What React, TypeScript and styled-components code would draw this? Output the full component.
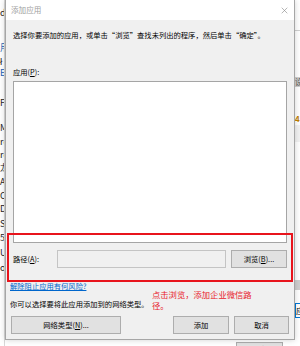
import React from "react";
import styled, { createGlobalStyle } from "styled-components";

const GlobalStyle = createGlobalStyle`
  html, body {
    margin: 0;
    padding: 0;
    background: #ffffff;
  }
  body {
    font-family: "Noto Sans CJK SC", "Noto Sans", sans-serif;
    -webkit-font-smoothing: antialiased;
  }
`;

// 背景窗口里露出来的碎片
const leftBits: { text: string; color?: string; gap: number }[] = [
  { text: "d", gap: 8 },
  { text: "用", color: "#1a5fb4", gap: 25 },
  { text: "ł", gap: 4 },
  { text: "E", color: "#1a5fb4", gap: 1 },
  { text: "F", gap: 20 },
  { text: "Mi", gap: 15 },
  { text: "re", gap: 4 },
  { text: "re", gap: 3 },
  { text: "龙", gap: 3 },
  { text: "A", gap: 4 },
  { text: "Cl", gap: 4 },
  { text: "Di", gap: 3 },
  { text: "Se", gap: 5 },
  { text: "5e", gap: 4 },
  { text: "U", gap: 5 },
  { text: "or", gap: 5 },
];

const App: React.FC = () => {
  return (
    <Desktop>
      <GlobalStyle />
      <BackWindow>
        <LeftStrip>
          {leftBits.map((b, i) => (
            <StripText key={i} color={b.color} gap={b.gap}>
              {b.text}
            </StripText>
          ))}
        </LeftStrip>
        <BackMiddle>
          <BackButton>确定</BackButton>
        </BackMiddle>
        <RightStrip>
          <StripLine />
          <StripBlock tall={10}>设</StripBlock>
          <StripIcon>4</StripIcon>
          <StripBlock tall={17} light />
          <StripSpacer />
          <StripBlock tall={10} />
          <StripButton>应</StripButton>
        </RightStrip>
      </BackWindow>

      <Dialog>
        <TitleBar>
          <Title>添加应用</Title>
          <CloseIcon viewBox="0 0 10 10">
            <path d="M1 1 L9 9 M9 1 L1 9" />
          </CloseIcon>
        </TitleBar>
        <Body>
          <TopSection>
            <Instruction>
              选择你要添加的应用，或单击“浏览”查找未列出的程序，然后单击“确定”。
            </Instruction>
            <Label>
              应用(<u>P</u>):
            </Label>
            <ListBox />
            <PathRow>
              <Label>
                路径(<u>A</u>):
              </Label>
              <PathInput />
              <Button width={56}>
                浏览(<u>B</u>)...
              </Button>
            </PathRow>
          </TopSection>
          <LowerSection>
            <Link>解除阻止应用有何风险?</Link>
            <Note>你可以选择要将此应用添加到的网络类型。</Note>
            <ButtonRow>
              <Button width={110}>
                网络类型(<u>N</u>)...
              </Button>
              <Spacer />
              <Button width={56}>添加</Button>
              <Button width={55}>取消</Button>
            </ButtonRow>
          </LowerSection>
        </Body>
      </Dialog>

      {/* 标注 */}
      <RedBox />
      <RedNote>
        点击浏览，添加企业微信路
        <br />
        径。
      </RedNote>
    </Desktop>
  );
};

const Desktop = styled.div`
  position: relative;
  width: 300px;
  height: 346px;
  overflow: hidden;
  background: #ffffff;
`;

const BackWindow = styled.div`
  display: flex;
  height: 100%;
`;

const LeftStrip = styled.div`
  width: 5px;
  display: flex;
  flex-direction: column;
  overflow: hidden;
  border-right: 1px solid #d8d8d8;
  box-sizing: border-box;
`;

const StripText = styled.div<{ color?: string; gap: number }>`
  margin-top: ${({ gap }) => gap}px;
  font-size: 9px;
  line-height: 10px;
  white-space: nowrap;
  color: ${({ color }) => color || "#222"};
`;

const BackMiddle = styled.div`
  flex: 1;
  display: flex;
  flex-direction: column;
  justify-content: flex-end;
  align-items: flex-end;
  padding-right: 12px;
`;

const BackButton = styled.div`
  width: 47px;
  height: 18px;
  margin-bottom: -14px;
  border: 1px solid #adadad;
  background: #e1e1e1;
  font-size: 7.5px;
  line-height: 14px;
  text-align: center;
  color: #000;
  box-sizing: border-box;
`;

const RightStrip = styled.div`
  width: 5px;
  display: flex;
  flex-direction: column;
  overflow: hidden;
  padding-top: 30px;
`;

const StripLine = styled.div`
  height: 1px;
  background: #d0d0d0;
`;

const StripBlock = styled.div<{ tall: number; light?: boolean }>`
  height: ${({ tall }) => tall}px;
  margin-top: ${({ light }) => (light ? 2 : 46)}px;
  background: ${({ light }) => (light ? "#f2f2f2" : "#cfcfcf")};
  font-size: 8px;
  line-height: 10px;
  color: #555;
  white-space: nowrap;
`;

const StripIcon = styled.div`
  margin-top: 27px;
  font-size: 8px;
  line-height: 9px;
  font-weight: bold;
  color: #c08000;
`;

const StripSpacer = styled.div`
  flex: 1;
`;

const StripButton = styled.div`
  margin: 13px 0 28px;
  height: 13px;
  border: 1px solid #0078d7;
  border-right: none;
  font-size: 8px;
  line-height: 13px;
  color: #000;
  white-space: nowrap;
`;

const Dialog = styled.div`
  position: absolute;
  left: 5px;
  top: 0;
  width: 290px;
  height: 340px;
  box-sizing: border-box;
  border: 1px solid #a6a6a6;
  border-top: none;
  background: #f0f0f0;
  box-shadow: 0 0 6px rgba(0, 0, 0, 0.18);
  display: flex;
  flex-direction: column;
`;

const TitleBar = styled.div`
  height: 20px;
  background: #ffffff;
  display: flex;
  align-items: center;
  justify-content: space-between;
  padding: 0 6px 0 5px;
`;

const Title = styled.div`
  font-size: 7.6px;
  line-height: 10px;
  color: #a0a0a0;
`;

const CloseIcon = styled.svg`
  width: 7px;
  height: 7px;
  stroke: #8a8a8a;
  stroke-width: 0.9;
  fill: none;
`;

const Body = styled.div`
  display: flex;
  flex-direction: column;
`;

const TopSection = styled.div`
  display: flex;
  flex-direction: column;
  padding: 10px 7px 0 7px;
`;

const Instruction = styled.div`
  font-size: 7.3px;
  line-height: 10px;
  color: #000;
  white-space: nowrap;
`;

const Label = styled.div`
  margin-top: 27px;
  font-size: 7.3px;
  line-height: 10px;
  color: #000;
  white-space: nowrap;
  u {
    text-decoration: underline;
  }
`;

const ListBox = styled.div`
  margin-top: 4px;
  height: 162px;
  background: #ffffff;
  border: 1px solid #a5a5a5;
  box-sizing: border-box;
`;

const PathRow = styled.div`
  margin-top: 7px;
  height: 18px;
  display: flex;
  align-items: center;
  gap: 5px;
  ${Label} {
    margin-top: 0;
    width: 39px;
  }
`;

const PathInput = styled.div`
  width: 169px;
  height: 18px;
  box-sizing: border-box;
  background: #f0f0f0;
  border: 1px solid #c4c4c4;
`;

const Button = styled.div<{ width: number }>`
  width: ${({ width }) => width}px;
  height: 18px;
  box-sizing: border-box;
  border: 1px solid #adadad;
  background: #e1e1e1;
  display: flex;
  align-items: center;
  justify-content: center;
  font-size: 7.3px;
  line-height: 10px;
  color: #000;
  white-space: nowrap;
  flex-shrink: 0;
`;

const LowerSection = styled.div`
  display: flex;
  flex-direction: column;
  padding: 13px 5px 0 4px;
`;

const Link = styled.div`
  font-size: 7.3px;
  line-height: 10px;
  color: #0066cc;
  text-decoration: underline;
  white-space: nowrap;
`;

const Note = styled.div`
  margin-top: 8px;
  font-size: 7.3px;
  line-height: 10px;
  color: #000;
  white-space: nowrap;
`;

const ButtonRow = styled.div`
  margin-top: 7px;
  display: flex;
  align-items: center;
  gap: 5px;
  padding-left: 1px;
`;

const Spacer = styled.div`
  flex: 1;
`;

const RedBox = styled.div`
  position: absolute;
  left: 7px;
  top: 233px;
  width: 286px;
  height: 49px;
  box-sizing: border-box;
  border: 2px solid #e8141c;
`;

const RedNote = styled.div`
  position: absolute;
  left: 152px;
  top: 289px;
  font-size: 8.3px;
  line-height: 11px;
  color: #e8202a;
  white-space: nowrap;
`;

export default App;
